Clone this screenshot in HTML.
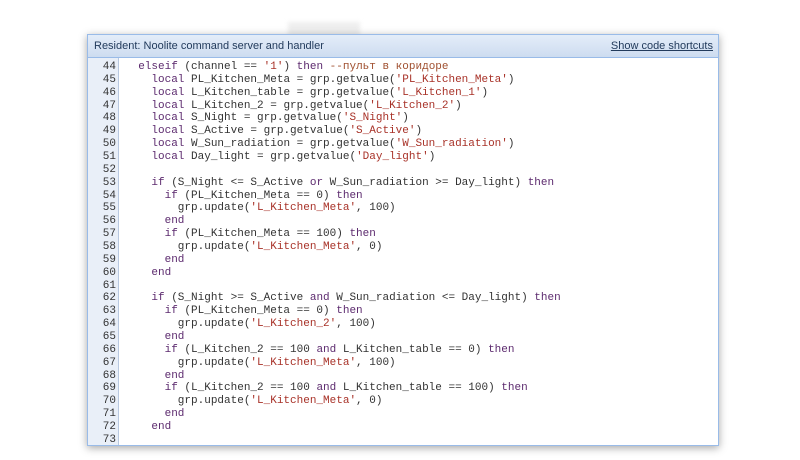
<!DOCTYPE html>
<html><head><style>
body{margin:0;width:800px;height:460px;background:#fff;position:relative;overflow:hidden;font-family:"Liberation Sans",sans-serif}
.tab{position:absolute;left:288px;top:22px;width:72px;height:14px;background:#eee;filter:blur(2px)}
.panel{position:absolute;left:87px;top:34px;width:630px;height:410px;border:1px solid #99bbe8;background:#fff;box-shadow:0 2px 8px rgba(0,0,0,.35)}
.hdr{height:22px;background:linear-gradient(#e4edf9,#cddcf0);border-bottom:1px solid #99bbe8;font-size:11px;color:#223b5c;line-height:23px;padding-left:6px;position:relative}
.hdr a{position:absolute;right:5px;top:0;color:#223b5c;text-decoration:underline}
.gut{position:absolute;left:0;top:23px;width:30px;bottom:0;background:#e9eff8;border-right:1px solid #b8c8e0}
pre{margin:0;font-family:"Liberation Mono",monospace;font-size:11px;line-height:12.86px;color:#333;position:absolute;top:26px}
.n{left:0;width:28px;text-align:right;color:#333}
.c{left:37px}
.k{color:#5c2a6e}.s{color:#a83228}.m{color:#a05030}
</style></head><body>
<div class="tab"></div>
<div class="panel">
<div class="hdr">Resident: Noolite command server and handler<a>Show code shortcuts</a></div>
<div class="gut"></div>
<pre class="n">44
45
46
47
48
49
50
51
52
53
54
55
56
57
58
59
60
61
62
63
64
65
66
67
68
69
70
71
72
73</pre>
<pre class="c">  <span class="k">elseif</span> (channel == <span class="s">'1'</span>) <span class="k">then</span> <span class="m">--пульт в коридоре</span>
    <span class="k">local</span> PL_Kitchen_Meta = grp.getvalue(<span class="s">'PL_Kitchen_Meta'</span>)
    <span class="k">local</span> L_Kitchen_table = grp.getvalue(<span class="s">'L_Kitchen_1'</span>)
    <span class="k">local</span> L_Kitchen_2 = grp.getvalue(<span class="s">'L_Kitchen_2'</span>)
    <span class="k">local</span> S_Night = grp.getvalue(<span class="s">'S_Night'</span>)
    <span class="k">local</span> S_Active = grp.getvalue(<span class="s">'S_Active'</span>)
    <span class="k">local</span> W_Sun_radiation = grp.getvalue(<span class="s">'W_Sun_radiation'</span>)
    <span class="k">local</span> Day_light = grp.getvalue(<span class="s">'Day_light'</span>)

    <span class="k">if</span> (S_Night &lt;= S_Active <span class="k">or</span> W_Sun_radiation &gt;= Day_light) <span class="k">then</span>
      <span class="k">if</span> (PL_Kitchen_Meta == 0) <span class="k">then</span>
        grp.update(<span class="s">'L_Kitchen_Meta'</span>, 100)
      <span class="k">end</span>
      <span class="k">if</span> (PL_Kitchen_Meta == 100) <span class="k">then</span>
        grp.update(<span class="s">'L_Kitchen_Meta'</span>, 0)
      <span class="k">end</span>
    <span class="k">end</span>

    <span class="k">if</span> (S_Night &gt;= S_Active <span class="k">and</span> W_Sun_radiation &lt;= Day_light) <span class="k">then</span>
      <span class="k">if</span> (PL_Kitchen_Meta == 0) <span class="k">then</span>
        grp.update(<span class="s">'L_Kitchen_2'</span>, 100)
      <span class="k">end</span>
      <span class="k">if</span> (L_Kitchen_2 == 100 <span class="k">and</span> L_Kitchen_table == 0) <span class="k">then</span>
        grp.update(<span class="s">'L_Kitchen_Meta'</span>, 100)
      <span class="k">end</span>
      <span class="k">if</span> (L_Kitchen_2 == 100 <span class="k">and</span> L_Kitchen_table == 100) <span class="k">then</span>
        grp.update(<span class="s">'L_Kitchen_Meta'</span>, 0)
      <span class="k">end</span>
    <span class="k">end</span>
</pre>
</div>
</body></html>
